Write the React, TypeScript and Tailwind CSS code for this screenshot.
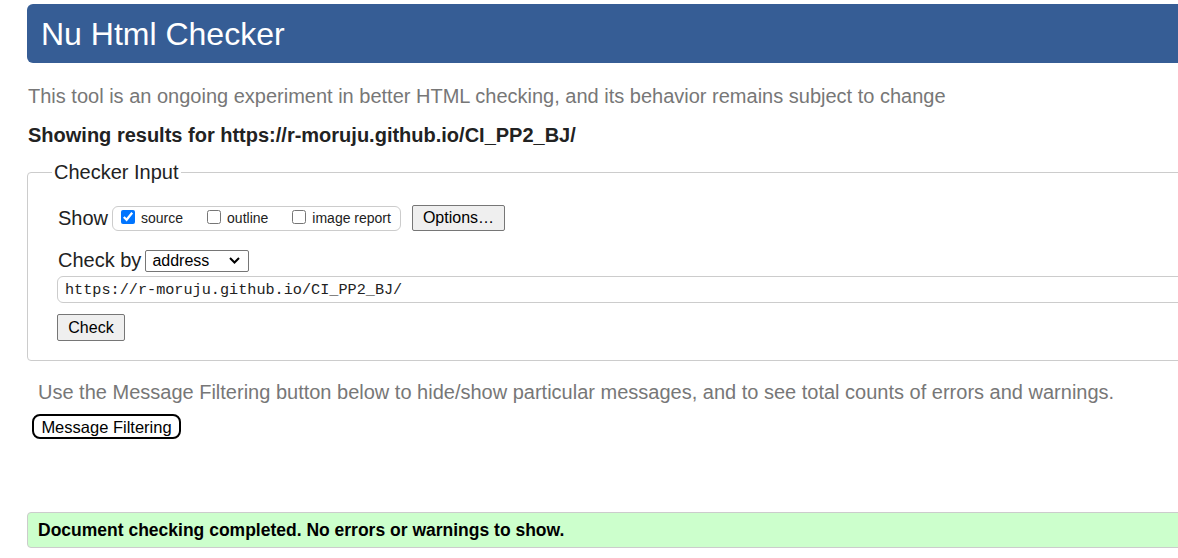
import React from "react";

function Chevron() {
  return (
    <svg width="11" height="7" viewBox="0 0 11 7" className="block">
      <path d="M1 1 L5.5 5.5 L10 1" fill="none" stroke="#000" strokeWidth="2" />
    </svg>
  );
}

function Check({ label, checked }: { label: string; checked?: boolean }) {
  return (
    <label className="flex items-center">
      <input type="checkbox" defaultChecked={checked} className="w-[14px] h-[14px] m-0 mb-[3px] accent-[#0075ff]" />
      <span className="ml-[6px] text-[14px] leading-[16px] text-[#222]">{label}</span>
    </label>
  );
}

export default function App() {
  return (
    <div
      className="w-[1178px] h-[558px] overflow-hidden bg-white"
      style={{ fontFamily: '"Liberation Sans", Arial, sans-serif' }}
    >
      <div className="pl-[27px] pt-[4px] w-[1200px]">
        <div className="h-[59px] bg-[#365d95] rounded-l-[6px] flex items-center pl-[14px]">
          <h1 className="text-[32px] leading-[36px] text-white font-normal">Nu Html Checker</h1>
        </div>
        <p className="mt-[22px] text-[20px] leading-[23px] text-[#777] pl-[1px]">
          This tool is an ongoing experiment in better HTML checking, and its behavior remains subject to change
        </p>
        <p className="mt-[16px] text-[20px] leading-[23px] font-bold text-[#222] pl-[1px]">
          Showing results for https://r-moruju.github.io/CI_PP2_BJ/
        </p>
        <fieldset className="mt-[14px] border border-[#ccc] rounded-[4px] pl-[30px] pb-[19px]">
          <legend className="ml-[-6px] px-[2px] text-[20px] leading-[23px] text-[#222]">Checker Input</legend>
          <div className="mt-[21px] flex items-center">
            <span className="text-[20px] leading-[23px] text-[#222]">Show</span>
            <div className="ml-[4px] h-[25px] border border-[#ccc] rounded-[6px] flex items-center pl-[8px] pr-[9px] gap-[24px]">
              <Check label="source" checked />
              <Check label="outline" />
              <Check label="image report" />
            </div>
            <button className="ml-[11px] h-[26px] px-[10px] bg-[#efefef] border border-[#767676] rounded-[2px] text-[16px] leading-[18px] text-black">
              Options…
            </button>
          </div>
          <div className="mt-[18px] flex items-center">
            <span className="text-[20px] leading-[23px] text-[#222]">Check by</span>
            <div className="ml-[4px] w-[104px] h-[22px] border border-[#767676] rounded-[2px] flex items-center justify-between pl-[6px] pr-[8px]">
              <span className="text-[16px] leading-[18px] text-black">address</span>
              <Chevron />
            </div>
          </div>
          <div className="mt-[4px] ml-[-1px] h-[27px] border border-[#ccc] rounded-l-[6px] flex items-center pl-[7px]">
            <span className="text-[15.2px] leading-[18px] text-[#222]" style={{ fontFamily: '"Liberation Mono", "DejaVu Sans Mono", monospace' }}>
              https://r-moruju.github.io/CI_PP2_BJ/
            </span>
          </div>
          <button className="mt-[11px] ml-[-1px] w-[68px] h-[27px] bg-[#efefef] border border-[#767676] rounded-[2px] text-[16px] leading-[18px] text-black flex items-center justify-center">
            Check
          </button>
        </fieldset>
        <p className="mt-[20px] pl-[11px] text-[20px] leading-[23px] text-[#777]">
          Use the Message Filtering button below to hide/show particular messages, and to see total counts of errors and warnings.
        </p>
        <button className="mt-[10px] ml-[5px] w-[149px] h-[25px] bg-white border-2 border-black rounded-[8px] text-[16.5px] leading-[18px] text-black flex items-center justify-center">
          Message Filtering
        </button>
        <div className="mt-[73px] h-[36px] bg-[#ccffcc] border border-[#ccc] rounded-l-[4px] flex items-center pl-[10px]">
          <span className="text-[17.5px] leading-[20px] font-bold text-black">
            Document checking completed. No errors or warnings to show.
          </span>
        </div>
      </div>
    </div>
  );
}
